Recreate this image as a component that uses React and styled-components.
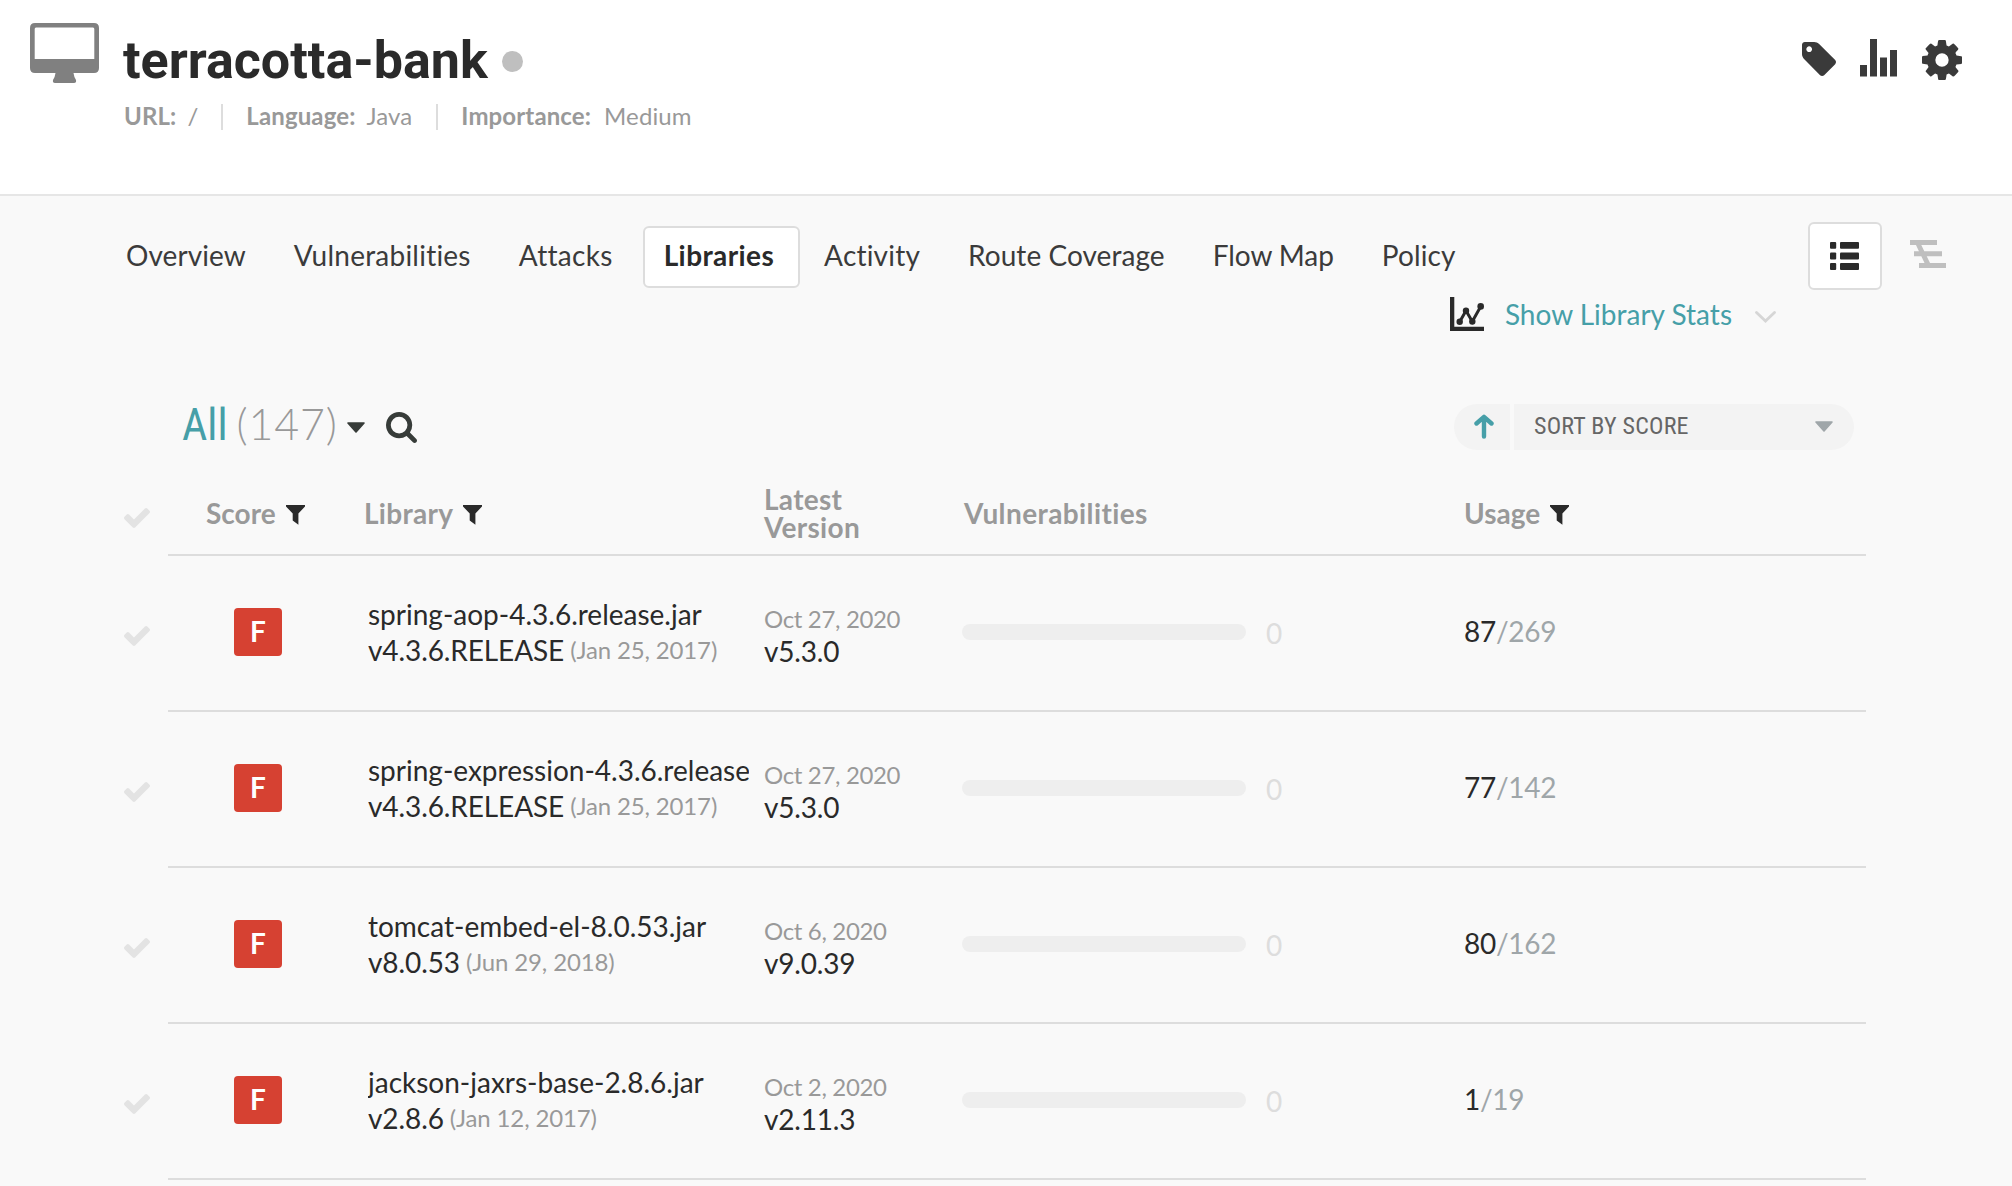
import React from "react";
import styled, { createGlobalStyle } from "styled-components";

const GlobalStyle = createGlobalStyle`
  * { box-sizing: border-box; }
  body {
    margin: 0;
    background: #f9f9f9;
    color: #2a2a2a;
    font-family: Lato, "Liberation Sans", sans-serif;
    font-size: 28px;
    overflow: hidden;
  }
`;

/* ---------- layout ---------- */

const Page = styled.div`
  display: flex;
  flex-direction: column;
  width: 2012px;
  height: 1186px;
  overflow: hidden;
`;

const Header = styled.header`
  display: flex;
  align-items: flex-start;
  height: 196px;
  flex: none;
  padding: 0 50px 0 30px;
  background: #fff;
  border-bottom: 2px solid #e6e6e6;
`;

const HeaderIcon = styled.div`
  flex: none;
  width: 93px;
  padding-top: 23px;
  line-height: 0;
`;

const HeaderText = styled.div`
  flex: 1;
  padding-top: 31px;
`;

const TitleRow = styled.div`
  display: flex;
  align-items: center;
  gap: 14px;
  height: 60px;
`;

const Title = styled.h1`
  margin: 0;
  font: 700 52px/60px Roboto, sans-serif;
  color: #2a2a2a;
`;

const StatusDot = styled.span`
  width: 21px;
  height: 21px;
  margin-top: 1px;
  border-radius: 50%;
  background: #bfbfbf;
`;

const Meta = styled.dl`
  display: flex;
  margin: 13px 0 0 1px;
  font-size: 24px;
  line-height: 24px;
  letter-spacing: 0.12px;
  color: #999;
`;

const MetaItem = styled.div`
  display: flex;
  gap: 11px;
  height: 26px;

  & + & {
    margin-left: 23px;
    padding-left: 23px;
    border-left: 2px solid #ddd;
  }

  & + & + & {
    margin-left: 24px;
    gap: 13px;
  }
`;

const MetaLabel = styled.dt`
  font-weight: 700;
`;

const MetaValue = styled.dd`
  margin: 0;
`;

const HeaderActions = styled.div`
  display: flex;
  align-items: flex-start;
  padding-top: 39px;
  gap: 25px;
`;

const ActionButton = styled.button`
  display: flex;
  margin: ${(p) => p.$top || 0}px ${(p) => p.$right || 0}px 0 0;
  padding: 0;
  border: 0;
  background: none;
  color: #3a3a3a;
`;

/* ---------- navigation ---------- */

const Nav = styled.nav`
  display: flex;
  justify-content: space-between;
  align-items: flex-start;
  flex: none;
  height: 101px;
  padding: 26px 66px 0 102px;
`;

const Tabs = styled.div`
  display: flex;
  padding-top: 4px;
`;

const Tab = styled.a`
  display: flex;
  align-items: center;
  height: 62px;
  padding: ${(p) => (p.$active ? "0 24px 4px 19px" : "0 24px 4px")};
  margin-left: ${(p) => (p.$active ? 6 : 0)}px;
  letter-spacing: ${(p) => p.$spacing}px;
  font-weight: ${(p) => (p.$active ? 700 : 400)};
  color: ${(p) => (p.$active ? "#2a2a2a" : "#3b3b3b")};
  background: ${(p) => (p.$active ? "#fff" : "transparent")};
  border: ${(p) => (p.$active ? "2px solid #ddd" : "0")};
  border-radius: 6px;
  white-space: nowrap;
`;

const ViewSwitch = styled.div`
  display: flex;
  align-items: flex-start;
  gap: 28px;
`;

const ViewButton = styled.button`
  display: flex;
  align-items: center;
  justify-content: center;
  width: ${(p) => (p.$active ? 74 : 36)}px;
  height: 68px;
  padding: ${(p) => (p.$active ? "0 2px 0 0" : "0 0 4px")};
  color: ${(p) => (p.$active ? "#2a2a2a" : "#bfbfbf")};
  background: ${(p) => (p.$active ? "#fff" : "transparent")};
  border: ${(p) => (p.$active ? "2px solid #ddd" : "0")};
  border-radius: 6px;
`;

const StatsToggle = styled.button`
  display: flex;
  align-items: center;
  align-self: flex-end;
  flex: none;
  height: 34px;
  margin-right: 236px;
  padding: 0;
  border: 0;
  background: none;
  color: #2a2a2a;
`;

const StatsLabel = styled.span`
  margin: 0 23px 0 21px;
  font: 400 28px/34px Lato, sans-serif;
  color: #469fa8;
`;

const StatsChevron = styled.span`
  display: flex;
  margin-top: 6px;
  color: #d6d6d6;
`;

/* ---------- toolbar ---------- */

const Toolbar = styled.div`
  display: flex;
  align-items: center;
  justify-content: space-between;
  flex: none;
  height: 46px;
  margin: 73px 158px 0 182px;
`;

const QuickFilter = styled.div`
  display: flex;
  align-items: center;
`;

const FilterText = styled.div`
  display: flex;
  align-items: baseline;
  height: 46px;
  margin-top: -6px;
  line-height: 46px;
`;

const FilterName = styled.span`
  font-family: "Roboto Condensed", Roboto, sans-serif;
  font-size: 44px;
  color: #469fa8;
`;

const FilterCount = styled.span`
  margin-left: 9px;
  font-size: 43px;
  font-weight: 300;
  letter-spacing: 0.8px;
  color: #999;
`;

const FilterCaret = styled.span`
  display: flex;
  margin: 1px 21px 0 9px;
  color: #373c39;
`;

const SearchIcon = styled.span`
  display: flex;
  color: #373c39;
`;

const SortControl = styled.div`
  display: flex;
  gap: 4px;
  height: 46px;
`;

const SortDirection = styled.button`
  display: flex;
  align-items: center;
  width: 56px;
  padding: 0 0 2px 20px;
  border: 0;
  border-radius: 23px 0 0 23px;
  background: #f3f3f3;
  color: #469fa8;
`;

const SortSelect = styled.div`
  display: flex;
  align-items: center;
  justify-content: space-between;
  width: 340px;
  padding: 0 21px 2px 20px;
  border-radius: 0 23px 23px 0;
  background: #f3f3f3;
  color: #9fa6a9;
`;

const SortLabel = styled.span`
  font: 400 24px/28px "Roboto Condensed", Roboto, sans-serif;
  letter-spacing: 0.22px;
  color: #666;
`;

/* ---------- table ---------- */

const Table = styled.div`
  display: flex;
  flex-direction: column;
  padding: 0 146px 0 124px;
`;

const TableRow = styled.div`
  display: flex;
  flex: none;
`;

const CheckCell = styled.div`
  display: flex;
  align-items: center;
  flex: none;
  width: 44px;
  padding-top: ${(p) => (p.$head ? 30 : 4)}px;
  color: #e3e3e3;
`;

const Cells = styled.div`
  display: grid;
  grid-template-columns: 195px 400px 199px 502px 1fr;
  align-items: center;
  flex: 1;
  border-bottom: 2px solid #ddd;
`;

const HeadCells = styled(Cells)`
  height: 106px;
  padding-top: 21px;
  font-weight: 700;
  line-height: 28px;
  color: #999;
`;

const BodyCells = styled(Cells)`
  height: 156px;
  padding-bottom: 2px;
`;

const HeadCell = styled.div`
  display: flex;
  align-items: center;
  gap: 10px;
  padding-left: ${(p) => p.$indent || 0}px;
  letter-spacing: ${(p) => p.$spacing || 0}px;
`;

const FunnelWrap = styled.span`
  display: flex;
  margin-top: 5px;
  color: #2a2a2a;
`;

const Grade = styled.span`
  display: flex;
  align-items: center;
  justify-content: center;
  width: 48px;
  height: 48px;
  margin-left: 66px;
  padding-bottom: 3px;
  border-radius: 4px;
  background: #d64132;
  color: #fff;
  font-size: 28px;
  font-weight: 700;
  line-height: 28px;
`;

const LibraryCell = styled.div`
  width: 381px;
  margin-left: 5px;
  line-height: 36px;
  white-space: nowrap;
  overflow: hidden;
`;

const LibraryName = styled.div`
  height: 36px;
`;

const LibraryVersion = styled.div`
  display: flex;
  height: 36px;
  gap: 6px;
  letter-spacing: -0.1px;
`;

const Released = styled.span`
  font-size: 24px;
  letter-spacing: -0.15px;
  color: #999;
`;

const VersionCell = styled.div`
  padding: 6px 0 0 1px;
  line-height: 33px;
  letter-spacing: -0.2px;
`;

const VersionDate = styled.div`
  font-size: 24px;
  line-height: 33px;
  letter-spacing: -0.35px;
  color: #999;
`;

const VulnCell = styled.div`
  display: flex;
  align-items: center;
  gap: 20px;
`;

const Track = styled.div`
  width: 284px;
  height: 16px;
  border-radius: 8px;
  background: #eee;
`;

const VulnCount = styled.span`
  padding-top: 2px;
  line-height: 28px;
  color: #ddd;
`;

const UsageCell = styled.div`
  padding-bottom: 2px;
  line-height: 28px;
  letter-spacing: -0.3px;
`;

const UsageTotal = styled.span`
  color: #9fa6a9;
`;

/* ---------- icons ---------- */

const Monitor = () => (
  <svg width="69" height="60" viewBox="0 0 69 60">
    <path
      fill="#808080"
      fillRule="evenodd"
      d="M5 0H64Q69 0 69 5V45Q69 50 64 50H43.500Q44 54 46 57Q46.600 60 44 60H25Q22.400 60 23 57Q25 54 25.500 50H5Q0 50 0 45V5Q0 0 5 0ZM6 4.500Q4.700 4.500 4.700 6V36H64.300V6Q64.300 4.500 63 4.500Z"
    />
  </svg>
);

const Tag = () => (
  <svg width="34" height="34" viewBox="128 128 1515 1515" fill="currentColor">
    <path d="M576 448q0-53-37.500-90.500t-90.500-37.500-90.500 37.500-37.500 90.500 37.500 90.500 90.500 37.500 90.500-37.500 37.500-90.500zm1067 576q0 53-37 90l-491 492q-39 37-91 37-53 0-90-37l-715-716q-38-37-64.500-101t-26.500-117v-416q0-52 38-90t90-38h416q53 0 117 26.500t102 64.500l715 714q37 39 37 91z" />
  </svg>
);

const Bars = () => (
  <svg width="37" height="38" viewBox="0 0 37 38" fill="currentColor">
    <path d="M0 26H7V37.500H0ZM10 0H17V37.500H10ZM20 18.500H27V37.500H20ZM30 11H37V37.500H30Z" />
  </svg>
);

const Gear = () => (
  <svg width="40" height="40" viewBox="128 128 1536 1536" fill="currentColor">
    <path d="M1152 896q0-106-75-181t-181-75-181 75-75 181 75 181 181 75 181-75 75-181zm512-109v222q0 12-8 23t-20 13l-185 28q-19 54-39 91 35 50 107 138 10 12 10 25t-9 23q-27 37-99 108t-94 71q-12 0-26-9l-138-108q-44 23-91 38-16 136-29 186-7 28-36 28h-222q-14 0-24.500-8.500t-11.500-21.500l-28-184q-49-16-90-37l-141 107q-10 9-25 9-14 0-25-11-126-114-165-168-7-10-7-23 0-12 8-23 15-21 51-66.500t54-70.500q-27-50-41-99l-183-27q-13-2-21-12.500t-8-23.500v-222q0-12 8-23t19-13l186-28q14-46 39-92-40-57-107-138-10-12-10-24 0-10 9-23 26-36 98.500-107.500t94.500-71.500q13 0 26 10l138 107q44-23 91-38 16-136 29-186 7-28 36-28h222q14 0 24.500 8.500t11.500 21.500l28 184q49 16 90 37l142-107q9-9 24-9 13 0 25 10 129 119 165 170 7 8 7 22 0 12-8 23-15 21-51 66.500t-54 70.500q26 50 41 98l183 28q13 2 21 12.500t8 23.500z" />
  </svg>
);

const ListIcon = () => (
  <svg width="29" height="28" viewBox="0 0 29 28" fill="currentColor">
    {[0, 10.6, 21.1].map((y) => (
      <g key={y}>
        <rect x="0" y={y} width="6.200" height="6.800" rx="1" />
        <rect x="10" y={y} width="19" height="6.800" rx="1" />
      </g>
    ))}
  </svg>
);

const FlowIcon = () => (
  <svg width="36" height="28" viewBox="0 0 36 28" fill="currentColor">
    <path d="M0 0H27V5H0ZM4 11.300H32V16.300H4ZM9 23H36V28H9ZM5.500 4H10.800L20.500 24H15Z" />
  </svg>
);

const ChartIcon = () => (
  <svg width="34" height="34" viewBox="0 0 34 34" fill="currentColor">
    <path d="M0 0H4.300V29.800H34V34H0Z" />
    <path d="M9.700 24.700L16 13.700L22.300 24.500L30.700 9.400" fill="none" stroke="currentColor" strokeWidth="3" />
    <circle cx="9.700" cy="24.700" r="3.200" />
    <circle cx="16" cy="13.800" r="3.200" />
    <circle cx="22.300" cy="24.500" r="3.200" />
    <circle cx="30.700" cy="9.400" r="3.300" />
  </svg>
);

const Chevron = () => (
  <svg width="21" height="12" viewBox="0 0 21 12">
    <path d="M1.500 1.500L10.500 10L19.500 1.500" fill="none" stroke="currentColor" strokeWidth="2.800" strokeLinecap="round" />
  </svg>
);

const Caret = () => (
  <svg width="18" height="11" viewBox="0 0 18 11">
    <path d="M1 1H17L9 10Z" fill="currentColor" stroke="currentColor" strokeWidth="1.600" strokeLinejoin="round" />
  </svg>
);

const Search = () => (
  <svg width="31" height="31" viewBox="64 128 1664 1664" fill="currentColor">
    <path d="M1216 832q0-185-131.500-316.500t-316.500-131.500-316.500 131.500-131.500 316.500 131.500 316.500 316.500 131.500 316.500-131.500 131.500-316.500zm512 832q0 52-38 90t-90 38q-54 0-90-38l-343-342q-179 124-399 124-143 0-273.500-55.500t-225-150-150-225-55.500-273.500 55.500-273.500 150-225 225-150 273.500-55.500 273.500 55.500 225 150 150 225 55.500 273.500q0 220-124 399l343 343q37 37 37 90z" />
  </svg>
);

const ArrowUp = () => (
  <svg width="20" height="25" viewBox="0 0 20 25">
    <path
      d="M10 22.500V3.500M2.500 9.500L10 2.800L17.500 9.500"
      fill="none"
      stroke="currentColor"
      strokeWidth="4.400"
      strokeLinecap="round"
      strokeLinejoin="round"
    />
  </svg>
);

const Check = () => (
  <svg width="26" height="20" viewBox="121 334 1550 1188" fill="currentColor">
    <path d="M1671 566q0 40-28 68l-724 724-136 136q-28 28-68 28t-68-28l-136-136-362-362q-28-28-28-68t28-68l136-136q28-28 68-28t68 28l294 295 656-657q28-28 68-28t68 28l136 136q28 28 28 68z" />
  </svg>
);

const Funnel = () => (
  <FunnelWrap>
    <svg width="19" height="20" viewBox="0 0 19 20" fill="currentColor">
      <path d="M0 0H19V1.500L12.400 8.500V19.700L6.700 15.500V8.500L0 1.500Z" />
    </svg>
  </FunnelWrap>
);

/* ---------- data ---------- */

const meta = [
  ["URL:", "/"],
  ["Language:", "Java"],
  ["Importance:", "Medium"],
];

const tabs = [
  { label: "Overview", spacing: 0.08 },
  { label: "Vulnerabilities", spacing: 0.23 },
  { label: "Attacks", spacing: 0.3 },
  { label: "Libraries", spacing: 0.4, active: true },
  { label: "Activity", spacing: 0.2 },
  { label: "Route Coverage", spacing: 0.06 },
  { label: "Flow Map", spacing: -0.06 },
  { label: "Policy", spacing: 0.08 },
];

const libraries = [
  { grade: "F", name: "spring-aop-4.3.6.release.jar", version: "v4.3.6.RELEASE", released: "Jan 25, 2017", latestDate: "Oct 27, 2020", latest: "v5.3.0", vulns: 0, used: 87, total: 269 },
  { grade: "F", name: "spring-expression-4.3.6.release.jar", version: "v4.3.6.RELEASE", released: "Jan 25, 2017", latestDate: "Oct 27, 2020", latest: "v5.3.0", vulns: 0, used: 77, total: 142 },
  { grade: "F", name: "tomcat-embed-el-8.0.53.jar", version: "v8.0.53", released: "Jun 29, 2018", latestDate: "Oct 6, 2020", latest: "v9.0.39", vulns: 0, used: 80, total: 162 },
  { grade: "F", name: "jackson-jaxrs-base-2.8.6.jar", version: "v2.8.6", released: "Jan 12, 2017", latestDate: "Oct 2, 2020", latest: "v2.11.3", vulns: 0, used: 1, total: 19 },
];

const LibraryRow = ({ item }) => (
  <TableRow>
    <CheckCell>
      <Check />
    </CheckCell>
    <BodyCells>
      <Grade>{item.grade}</Grade>
      <LibraryCell>
        <LibraryName>{item.name}</LibraryName>
        <LibraryVersion>
          <span>{item.version}</span>
          <Released>({item.released})</Released>
        </LibraryVersion>
      </LibraryCell>
      <VersionCell>
        <VersionDate>{item.latestDate}</VersionDate>
        <div>{item.latest}</div>
      </VersionCell>
      <VulnCell>
        <Track />
        <VulnCount>{item.vulns}</VulnCount>
      </VulnCell>
      <UsageCell>
        {item.used}
        <UsageTotal>/{item.total}</UsageTotal>
      </UsageCell>
    </BodyCells>
  </TableRow>
);

export default function App() {
  return (
    <Page>
      <GlobalStyle />
      <Header>
        <HeaderIcon>
          <Monitor />
        </HeaderIcon>
        <HeaderText>
          <TitleRow>
            <Title>terracotta-bank</Title>
            <StatusDot />
          </TitleRow>
          <Meta>
            {meta.map(([label, value]) => (
              <MetaItem key={label}>
                <MetaLabel>{label}</MetaLabel>
                <MetaValue>{value}</MetaValue>
              </MetaItem>
            ))}
          </Meta>
        </HeaderText>
        <HeaderActions>
          <ActionButton $top={3} $right={-1}>
            <Tag />
          </ActionButton>
          <ActionButton>
            <Bars />
          </ActionButton>
          <ActionButton $top={1}>
            <Gear />
          </ActionButton>
        </HeaderActions>
      </Header>

      <Nav>
        <Tabs>
          {tabs.map((tab) => (
            <Tab key={tab.label} $active={tab.active} $spacing={tab.spacing}>
              {tab.label}
            </Tab>
          ))}
        </Tabs>
        <ViewSwitch>
          <ViewButton $active>
            <ListIcon />
          </ViewButton>
          <ViewButton>
            <FlowIcon />
          </ViewButton>
        </ViewSwitch>
      </Nav>

      <StatsToggle>
        <ChartIcon />
        <StatsLabel>Show Library Stats</StatsLabel>
        <StatsChevron>
          <Chevron />
        </StatsChevron>
      </StatsToggle>

      <Toolbar>
        <QuickFilter>
          <FilterText>
            <FilterName>All</FilterName>
            <FilterCount>(147)</FilterCount>
          </FilterText>
          <FilterCaret>
            <Caret />
          </FilterCaret>
          <SearchIcon>
            <Search />
          </SearchIcon>
        </QuickFilter>
        <SortControl>
          <SortDirection>
            <ArrowUp />
          </SortDirection>
          <SortSelect>
            <SortLabel>SORT BY SCORE</SortLabel>
            <Caret />
          </SortSelect>
        </SortControl>
      </Toolbar>

      <Table>
        <TableRow>
          <CheckCell $head>
            <Check />
          </CheckCell>
          <HeadCells>
            <HeadCell $indent={38}>
              Score
              <Funnel />
            </HeadCell>
            <HeadCell $indent={1} $spacing={0.3}>
              Library
              <Funnel />
            </HeadCell>
            <HeadCell $indent={1} $spacing={0.3}>
              Latest
              <br />
              Version
            </HeadCell>
            <HeadCell $indent={2} $spacing={0.4}>
              Vulnerabilities
            </HeadCell>
            <HeadCell>
              Usage
              <Funnel />
            </HeadCell>
          </HeadCells>
        </TableRow>
        {libraries.map((item) => (
          <LibraryRow key={item.name} item={item} />
        ))}
      </Table>
    </Page>
  );
}
